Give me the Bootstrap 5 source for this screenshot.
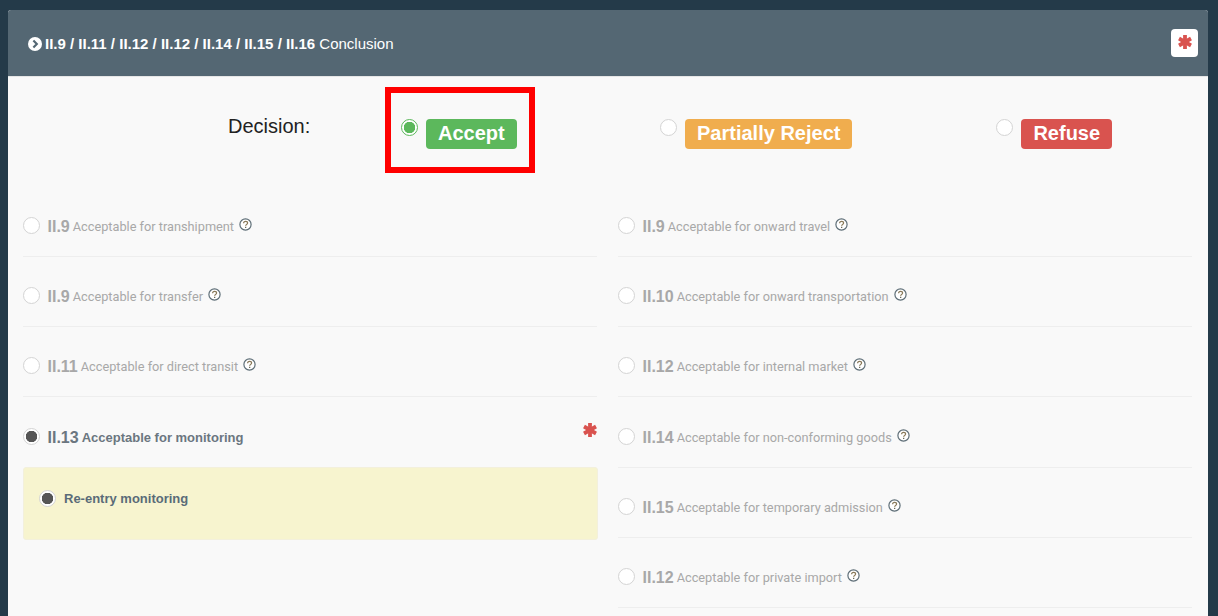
<!DOCTYPE html>
<html lang="en">
<head>
<meta charset="utf-8">
<title>Conclusion</title>
<link href="https://cdn.jsdelivr.net/npm/bootstrap@5.3.0/dist/css/bootstrap.min.css" rel="stylesheet">
<style>
html,body{height:616px;overflow:hidden}
body{background:#243a49;padding:10px 10px 0 8px;font-family:"Liberation Sans",Arial,sans-serif}
.panel-box{background:#f9f9f9;border-radius:3px 3px 0 0;height:606px;overflow:hidden}
.panel-head{height:67px;background:#546773;border-bottom:1px solid #e6e6e6;color:#fff;font-size:15px;padding:2px 10px 0 20px}
.panel-head strong{font-weight:700}
.head-ico{width:14px;height:14px;margin-right:3px;flex:none}
.req-box{width:27px;height:28px;background:#fff;border-radius:4px;margin-top:-2px}
.req-box .ast{margin-top:-2px}
.ast{width:14px;height:14px;display:block}
.decision{padding:10px 0 0 0;height:110px}
.dec-label{font-size:20px;color:#222;margin:29px 0 0 220px;width:157px;line-height:20px}
.red-frame{width:150px;height:86px;border:6px solid #f00;padding:26px 0 0 10px;gap:8px}
.dec-opt{gap:8px;padding-top:32px}
.opt-partial{margin-left:125px}
.opt-refuse{margin-left:144px}
.pill{display:inline-block;height:30px;line-height:28px;border-radius:4px;color:#fff;font-size:20px;font-weight:700;padding:0 12px}
.pill-ok{background:#5cb85c}
.pill-warn{background:#f0ad4e}
.pill-bad{background:#d9534f}
.rad{appearance:none;width:17px;height:17px;border-radius:50%;background:#fff;border:1px solid #d4d4d4;margin:0;flex:none;display:block}
.rad:checked{background:radial-gradient(circle,#555 0 5.5px,#fff 6px);}
.rad-ok:checked{background:radial-gradient(circle,#5cb85c 0 5.5px,#fff 6px);border-color:#5cb85c}
.cols{padding:0 15px;gap:21px}
.colm{width:574px;flex:none}
.opt-row{height:70px;border-bottom:1px solid #eee;padding-top:30px;gap:7.5px;color:#a8a8a8;align-items:flex-start}
.opt-row>div{margin-top:-2px}
.opt-row.tall{height:71px;padding-top:31px}
.opt-row.on{border-bottom:0;height:71px;padding-top:31px;color:#6b7680;position:relative}
.code{font-size:16px;font-weight:700;line-height:18px}
.desc{font-family:Roboto,"Liberation Sans",sans-serif;font-size:12.75px;line-height:18px;margin-left:3px;vertical-align:1px}
.on .desc{font-weight:700;font-family:"Liberation Sans",sans-serif;font-size:13px}
.help{width:13px;height:13px;margin-left:5px;margin-top:3px;display:inline-block;vertical-align:top}
.row-ast{position:absolute;right:0;top:26px}
.note-box{background:#f7f4cf;border-radius:3px;height:73px;width:575px;padding:22px 15px;gap:8px;border:1px solid #f3f0dc;margin-top:-1px}
.note-txt{font-size:13px;font-weight:700;color:#5a6b78;line-height:17px}
</style>
</head>
<body>
<svg width="0" height="0" class="position-absolute">
<defs>
<symbol id="i-ast" viewBox="0 0 14 14"><g stroke="#d9534f" stroke-width="3.8"><path d="M7 0v14"/><path d="M1 3.5l12 7"/><path d="M13 3.5L1 10.5"/></g></symbol>
<symbol id="i-help" viewBox="0 0 13 13"><circle cx="6.5" cy="6.5" r="5.6" fill="#fff" stroke="#5f6f78" stroke-width="1.2"/><path d="M4.6 5.2c0-1.2.9-1.9 2-1.9s2 .7 2 1.7c0 1.4-2 1.4-2 2.8" fill="none" stroke="#8a7a5a" stroke-width="1.2"/><path d="M6 8.7h1.3V10H6z" fill="#6a6a5a"/></symbol>
</defs>
</svg>
<div class="panel-box">
  <div class="panel-head d-flex align-items-center">
    <svg class="head-ico" viewBox="0 0 13 13"><circle cx="6.5" cy="6.5" r="6.5" fill="#fff"/><path d="M5 3.2l3.2 3.3L5 9.8" fill="none" stroke="#546773" stroke-width="2"/></svg>
    <span><strong>II.9 / II.11 / II.12 / II.12 / II.14 / II.15 / II.16</strong> Conclusion</span>
    <div class="req-box ms-auto d-flex align-items-center justify-content-center"><svg class="ast"><use href="#i-ast"/></svg></div>
  </div>
  <div class="decision d-flex align-items-start">
    <div class="dec-label">Decision:</div>
    <div class="red-frame d-flex align-items-start">
      <input class="rad rad-ok" type="radio" name="d" checked aria-label="Accept">
      <span class="pill pill-ok">Accept</span>
    </div>
    <div class="dec-opt opt-partial d-flex align-items-start">
      <input class="rad" type="radio" name="d" aria-label="Partially Reject">
      <span class="pill pill-warn">Partially Reject</span>
    </div>
    <div class="dec-opt opt-refuse d-flex align-items-start">
      <input class="rad" type="radio" name="d" aria-label="Refuse">
      <span class="pill pill-bad">Refuse</span>
    </div>
  </div>
  <div class="cols d-flex align-items-start">
    <div class="colm">
      <div class="opt-row d-flex"><input class="rad" type="radio" name="a"><div><span class="code">II.9</span><span class="desc">Acceptable for transhipment</span><svg class="help"><use href="#i-help"/></svg></div></div>
      <div class="opt-row d-flex"><input class="rad" type="radio" name="a"><div><span class="code">II.9</span><span class="desc">Acceptable for transfer</span><svg class="help"><use href="#i-help"/></svg></div></div>
      <div class="opt-row d-flex"><input class="rad" type="radio" name="a"><div><span class="code">II.11</span><span class="desc">Acceptable for direct transit</span><svg class="help"><use href="#i-help"/></svg></div></div>
      <div class="opt-row on d-flex"><input class="rad" type="radio" name="a" checked><div><span class="code">II.13</span><span class="desc">Acceptable for monitoring</span></div><svg class="ast row-ast"><use href="#i-ast"/></svg></div>
      <div class="note-box d-flex align-items-start"><input class="rad" type="radio" name="n" checked><span class="note-txt">Re-entry monitoring</span></div>
    </div>
    <div class="colm">
      <div class="opt-row d-flex"><input class="rad" type="radio" name="a"><div><span class="code">II.9</span><span class="desc">Acceptable for onward travel</span><svg class="help"><use href="#i-help"/></svg></div></div>
      <div class="opt-row d-flex"><input class="rad" type="radio" name="a"><div><span class="code">II.10</span><span class="desc">Acceptable for onward transportation</span><svg class="help"><use href="#i-help"/></svg></div></div>
      <div class="opt-row d-flex"><input class="rad" type="radio" name="a"><div><span class="code">II.12</span><span class="desc">Acceptable for internal market</span><svg class="help"><use href="#i-help"/></svg></div></div>
      <div class="opt-row tall d-flex"><input class="rad" type="radio" name="a"><div><span class="code">II.14</span><span class="desc">Acceptable for non-conforming goods</span><svg class="help"><use href="#i-help"/></svg></div></div>
      <div class="opt-row d-flex"><input class="rad" type="radio" name="a"><div><span class="code">II.15</span><span class="desc">Acceptable for temporary admission</span><svg class="help"><use href="#i-help"/></svg></div></div>
      <div class="opt-row d-flex"><input class="rad" type="radio" name="a"><div><span class="code">II.12</span><span class="desc">Acceptable for private import</span><svg class="help"><use href="#i-help"/></svg></div></div>
    </div>
  </div>
</div>
<script src="https://cdn.jsdelivr.net/npm/bootstrap@5.3.0/dist/js/bootstrap.bundle.min.js"></script>
</body>
</html>
